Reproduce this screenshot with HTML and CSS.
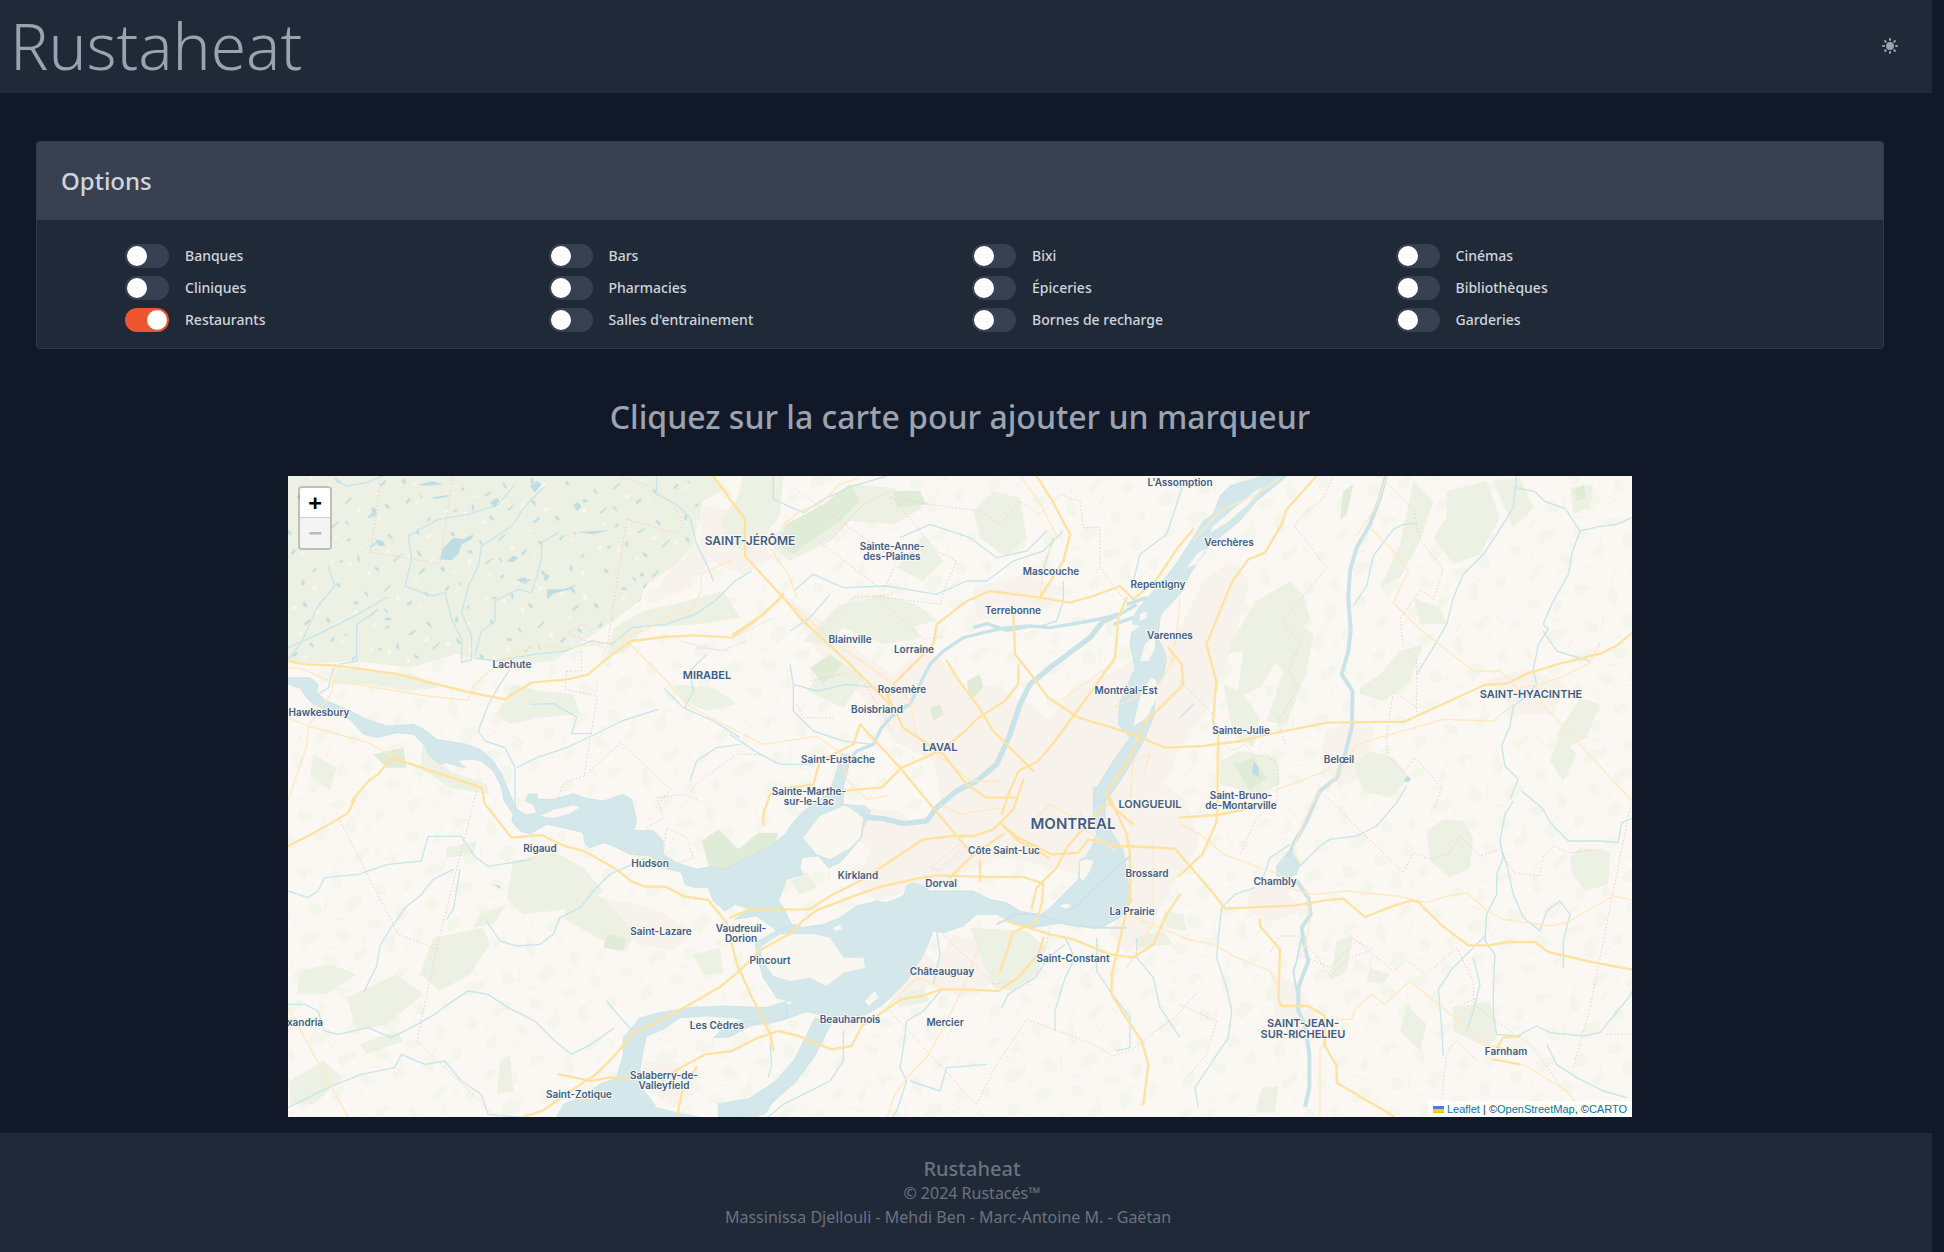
FILE: index.html
```html
<!DOCTYPE html>
<html lang="fr">
<head>
<meta charset="utf-8">
<meta name="viewport" content="width=device-width, initial-scale=1">
<title>Rustaheat</title>
<link rel="stylesheet" href="styles.css">
</head>
<body>
<header class="topbar">
  <h1 class="brand">Rustaheat</h1>
  <button class="theme" type="button" aria-label="Changer de thème">
    <svg width="20" height="20" viewBox="0 0 20 20" fill="currentColor" aria-hidden="true"><path fill-rule="evenodd" clip-rule="evenodd" d="M10 2a1 1 0 011 1v1a1 1 0 11-2 0V3a1 1 0 011-1zm4 8a4 4 0 11-8 0 4 4 0 018 0zm-.464 4.95l.707.707a1 1 0 001.414-1.414l-.707-.707a1 1 0 00-1.414 1.414zm2.12-10.607a1 1 0 010 1.414l-.706.707a1 1 0 11-1.414-1.414l.707-.707a1 1 0 011.414 0zM17 11a1 1 0 100-2h-1a1 1 0 100 2h1zm-7 4a1 1 0 011 1v1a1 1 0 11-2 0v-1a1 1 0 011-1zM5.05 6.464A1 1 0 106.465 5.05l-.708-.707a1 1 0 00-1.414 1.414l.707.707zm1.414 8.486l-.707.707a1 1 0 01-1.414-1.414l.707-.707a1 1 0 011.414 1.414zM4 11a1 1 0 100-2H3a1 1 0 000 2h1z"/></svg>
  </button>
</header>

<main class="content">
  <section class="card">
    <h2 class="card-title">Options</h2>
    <div class="options">
      <label class="option"><input class="switch" type="checkbox">Banques</label>
      <label class="option"><input class="switch" type="checkbox">Bars</label>
      <label class="option"><input class="switch" type="checkbox">Bixi</label>
      <label class="option"><input class="switch" type="checkbox">Cinémas</label>
      <label class="option"><input class="switch" type="checkbox">Cliniques</label>
      <label class="option"><input class="switch" type="checkbox">Pharmacies</label>
      <label class="option"><input class="switch" type="checkbox">Épiceries</label>
      <label class="option"><input class="switch" type="checkbox">Bibliothèques</label>
      <label class="option"><input class="switch" type="checkbox" checked>Restaurants</label>
      <label class="option"><input class="switch" type="checkbox">Salles d'entrainement</label>
      <label class="option"><input class="switch" type="checkbox">Bornes de recharge</label>
      <label class="option"><input class="switch" type="checkbox">Garderies</label>
    </div>
  </section>

  <h2 class="prompt">Cliquez sur la carte pour ajouter un marqueur</h2>

  <div class="map">
    <svg class="map-art" viewBox="0 0 1344 641" preserveAspectRatio="xMidYMid slice">
      <defs>
        <pattern id="fields" width="610" height="470" patternUnits="userSpaceOnUse" patternTransform="rotate(-18) scale(.8)">
          <path class="wood" d="M20 40l40-12 20 10-16 22-34 6zM110 90l26-30 14 8-10 34-22 8zM210 30l50 8 6 22-30-4-8 20-20-14zM320 110l18-40 16 6 4 40-14 30-18-8zM420 50l60-20 14 16-40 24-26 8zM540 100l24-22 22 18-10 20-24 4zM50 180l36-20 24 14 30-6-8 26-46 18-40-8zM200 190l14-26 20 4 22 38-16 12-34-8zM330 220l40-30 30 6 8 30-30 10-24 18zM470 180l26-10 10 40-20 14-22-12zM560 210l30-16 8 30-22 18zM20 300l24-18 26 22-14 26-30-6zM130 280l50-16 30 20-14 20-34 2-20 18zM270 310l14-20 24 10 20 30-20 14-30-8zM400 300l52 4 10 26-40 6-20-12zM510 300l30-18 16 26-20 28-26-4zM70 400l40-20 16 14-20 26-40 12zM190 380l26-10 30 34-14 18-28-8zM310 400l46-22 12 16-24 28-30 4zM430 400l30-30 20 10-10 50-30 6zM550 390l30-10 10 24-26 20-20-4z"/>
          <path class="wood-line" d="M80 110l40 30M150 20l20 34M280 170l-20 50M380 30l-30 24M440 130l30-22M510 50l16 34M150 220l-30 20M290 250l30 16M430 250l40-16M540 270l-20 12M100 340l-20 24M240 350l30 10M370 350l-18 24M480 370l30-14M160 440l30-12M280 440l20 14M500 440l30-20"/>
        </pattern>
        <pattern id="lakes" width="470" height="360" patternUnits="userSpaceOnUse" patternTransform="rotate(-24) scale(.8)">
          <path class="clearing" d="M30 30l14-6 4 6-12 8zM90 70l8-10 8 6-8 12zM150 20l20 4-4 8zM230 80l22-8 4 8-16 8zM400 90l16-6 6 8-14 8zM140 130l6-12 12 4-6 12zM300 130l12-10 8 8-10 10zM370 180l14-10 12 6-16 10zM30 240l16-8 6 6-14 10zM200 260l8-14 10 6-6 14zM280 220l24 4-4 8zM430 250l20-6 2 8zM80 320l10-14 10 8zM260 320l10-12 12 6zM410 320l16-8 6 10z"/>
          <path class="pond" d="M60 40l12-2 10 6-14 4zM130 60l6-12 6 2-4 18-8 6zM190 36l26-6 12 4-34 8zM270 20l4 20 10 8-4-24zM370 60l12-14 4 8-8 18zM430 30l20-4-8 8-14 6zM20 110l10 4 2 18-12-8zM180 110l10 16-2 12-12-14zM250 120l36-10 6 2-38 14zM350 120l8 18-6 14-8-20zM50 200l16 4 2 12-18-6zM110 180l4 16-6 8-4-20zM170 210l30-12 8 4-32 12zM320 200l30-10-6 12-22 6zM400 220l10-8 6 18-10 6zM90 270l32-8 6 2-34 12zM150 270l6 18-4 4-8-18zM230 290l28-8-10 12-16 4zM310 270l10 14-4 14-10-16zM380 300l18-10 8 4-18 12zM440 290l10 16-6 4zM120 340l16-6 2 8-14 4z"/>
        </pattern>
      </defs>
      <rect class="land" width="1344" height="641"/>

      <g transform="translate(-8 -5) scale(.33333)">
        <rect fill="url(#fields)" opacity=".5" x="24" y="15" width="4032" height="1923"/>

        <!-- Built-up areas -->
        <g class="urban">
          <path d="M1270 100l90 20 60 60 60 80-90 50-100-40-60 80-130 50 60-90 100-90z"/>
          <path d="M1510 370l130 90 110 90 90 60 80-70 60 20 80 100 80-20 110 60 60 50 60-90 130-60 190-110 80-160 80-60 60 60-60 220-50 140-110 160-60 130 10 160-110 120-170-60-190-40-190 70-190 60-60-40 60-160 200-70-30-150-120-60-100-140-130-130z"/>
          <path d="M2080 350l150-40 120 40-40 60-220 40zM2500 990l60-90 80 30 80 60 40 130-100 150-60 120-60 60-50-60 40-90-20-190z"/>
          <path d="M3140 780l90-40 50 60-20 110-80 40-60-80zM3620 630l120-40 120 50-40 90-110 0zM2920 1230l90 20 60 70-90 30-80-30zM2970 1500l80 40 60 90-40 70-80-40zM2020 1390l90 30 60 100-120 60-120-40zM1740 1010l120 10 60 60-110 80-90-60z"/>
          <path d="M960 1280l160 30 120 70-60 60-110-20zM1090 1770l90 0 90 80-90 60-80-60zM1790 1500l140-60 60 60-90 90-120-20zM1460 1420l200-20 90 90-100 50-130-20z"/>
        </g>

        <!-- Woodland -->
        <path class="wood" d="M24 15H1300l30 45-60 30-30 130-50 60-90 60-20 50-80 60-90 60-90 60-140 10-150-30-140 40-160-20-150 10-100-20-80 10z"/>
        <path fill="url(#lakes)" d="M24 15H1300l30 45-60 30-30 130-50 60-90 60-20 50-80 60-90 60-90 60-140 10-150-30-140 40-160-20-150 10-100-20-80 10z"/>
        <g class="wood">
          <path d="M1000 470l90-50 90-20 150-40 50 80-130 20-160 10-50 70-60 20zM170 590l90 10 140 10 80 40-100 10-110-20-110 0zM700 640l80 20 100 10 20 60-120 10-90 20-40-30zM430 820l80 80 110 40 10 30-120-20-90-60zM1180 640l120 10 70 50-90 20-70-30zM100 850l70 40-20 70-60-50z"/>
          <path d="M1390 15h120l-10 120-90 110-60-20-30-80 50-60zM1520 160l110-60 80-60 130 10 90 60-90 50-130-10-60 60-120 60-70-60zM1740 390l60-20 110 30 60 50-90 20-60-30zM2080 120l60-60 80 20 20 120-60 60-80-60zM1930 190l60 80-60 60-80-40z"/>
          <path d="M1680 400l130-20 80 60 30 60-110 20-120-50-60 50-60-10zM1660 560l90 60-60 90-110-50z"/>
          <path d="M2860 500l70-110 100-60 40 40 20 70-20 30-60 70-70 110-70 30 20-140-50 10zM3030 440l70 50-20 110-60 160-60-10 50-150-50-60zM3240 650l60-40 60-70 70-20-40 110-80 60-70-20zM3400 380l80 30 20 50-80 0zM3400 30l60 60-40 120-60 110-60 30 60-130zM3500 60l120-30 40 110-60 110-80 30-60-80 40-60zM3640 30l80-10 40 90-60 60zM3870 50l70-10-10 70-50 20zM3900 680l60 20-40 100-60 30-30-40zM3840 790l50 60-40 80-40-60z"/>
          <path d="M3220 880l50-40 70 20 50 60-60 60-80-20zM2820 870l60-30 110 20 10 80-70 30-110-30zM2830 640l50 20 60 80-20 90-60-40z"/>
          <path d="M3440 1080l50-35 60 5 30 50-10 90-60 30-60-50zM3870 1160l30-30 90 10-5 100-70 20-40-50zM3520 1610l110-20 20 110-30 30-100-50zM2945 1850l50-5-10 80-60 0zM3270 1490l60 20-20 30-50-10zM3170 1410l50-20-20 110-50 30zM3380 1600l60 60-20 80-60-60z"/>
          <path d="M700 1170l120-30 90 50 60 70-60 50-180 20-50-50zM880 1260l90 20 90 100-20 60-90-40-100-60zM460 1400l150-30 20 50-60 90-90 50-60-50zM500 1130l90-20-10 40-80 10zM1240 1450l80-20 10 80-60 0zM600 1330l80-30-40 60-60 10zM60 1500l90-20 80 30-90 60-90 0zM200 1580l150-70 80 60-110 90-90 20zM240 1720l110-40 20 30-110 40zM30 1830l100-60 60 50-90 80-70 0zM660 1770l30-20 10 110-50 10z"/>
          <path d="M2070 1370l170 10 60 50-30 80-70 50-60-10zM1530 1230l50-30 30 50-50 20zM1850 1580l80-30 20 40-90 20zM2650 1320l60 10 10 50-60-10zM2560 1400l90-20 30 40-100 10z"/>
        </g>
        <g class="park">
          <path d="M1520 160l110-60 80-60 30 50-60 60-90 60-50 40-50-30zM1840 60l80 0 20 40-90 10zM2060 630l40-20 10 40-40 40zM1950 710l30-10 10 30-30 20zM1590 590l60-40 40 30-60 60zM3190 60l30-20-20 90-20 20zM2860 880l60-20 40 60-50 40zM1265 1110l50-35 60 60 60-50 60 0-20 70-120 70-60-10zM980 1390l60 10-10 40-60-10zM280 850l90-20 10 60-60 0zM3880 60l30-20 10 40-30 10z"/>
        </g>

        <!-- Municipal and regional limits -->
        <g class="limit">
          <path d="M300 15l-10 110-20 118 210 34 38-262M1040 145l-60 390-120-50 45-25 30 20 40-40M1040 145l150 42 20-30-30-60-70-50-90-30M860 600l45 0 0-60M860 600l-5 55 97 20-40 240-60 20-20 55M912 915l110-100 150 140-30 36M1230 960l30-30 110-80 80 0"/>
          <path d="M1550 160l260 200 40-90-310-220M1630 230l120-130 80-40M1830 80l120 20 150 20 60 40 60-70 60 40 60-60 60 20 10 80 50 0 0 120 90 120M1780 375l200 25 20-60 30-70-60-30-140-170M1620 480l100-100 120-10M1790 375l140 130 60-10M1590 630l140-30 80 130 30 60M1550 700l20 40 90 0"/>
          <path d="M3160 15l-30 65-90 80 100 130-130 160 50 70-35 80 30 50-60 100 20 70M3300 15l100 100 20 90 70 90-30 90-40-30-60 90 10 80 40 40 0 160M3320 800l20-140 70 50M3320 800l5 60 50 40 30-40 80 90-20 60M2835 820l20 20 40-20 30 40 30-10 40 30-5 110-60 50-50 110M2700 630l110 110"/>
          <path d="M590 960l-110 430-70 320 240 228M175 1040l180 350 125 48"/>
          <path d="M3120 960l250 245 30-60 50 20 60-20 30-50 60 60 60-20 40 70 80 10 10-60 30-30 50 20 100-10M4050 1010l-120 600-50 180M3220 1405l60 30-80 30-50 50-40-60-50-60-60 0-30 50M3060 1450l90 40 80-80 110 90 40-30 60 40 90-80 50 100 0 70 180 130 90 130M2700 1600l110 50-30 100-60 70M3480 1938l20-190 30-40 60 60M3980 1690l76 0M3520 1610l80-30"/>
          <path d="M1980 1380l160 160 60-10 100-110 10-60M1820 1610l270 290 60-120 90-135 190 70 70 40 60-20 60-50 70-50 60-70"/>
          <path d="M1100 1070l50-30-20-60 80-10 50 20M1150 1150l30 30 60-20-20-60-60-30z"/>
        </g>

        <!-- Creeks and small rivers -->
        <g class="creek">
          <path d="M160 20l40 25 60-10 50-20M24 565l40-50 50-110 50-60-20-60M24 530l90-40 100-50 110-62M180 580l50-10 0-60 0-50 45-30M375 345l20-80-10-70 90-50 90-15 90-30 50-60M375 345l80 30 40-10 20 80 30 60 0 70 30-10 0-70-30-70 20-80 30-60 10-60 90-60 40-60 60-60M585 550l20-70 40-30 0-60 70-35 40 10 30-100 0-50 50-30M585 562l60 8 60-10 60-10 90-10 80-30 60 10 60-50 100-10 90-30 60-40 60-60 50-30M690 595l-30 45-35 60-30 80 20 30 60 20 30 60 0 160M710 890l60-30 90-30 75-35 90-45 110-35M750 700l70-2 70 40-15 50 60 0M1130 15l0 55 60 30 40 40 20 80 30 60 20 50M1150 650l60 60 90 40 80 50M1230 930l20-60 60-40 70-10M160 590l-15 60-30 20M1280 550l-50 50 10 60-25 50"/>
          <path d="M1480 15l0 70 90 40 60-40 90-40 100-30M1540 360l60-50 90 40 130-5 150 25 90-40 60 0 80-60 90-30 60-60M1860 200l90-40 120 40 80 60 90-20 60-60M2320 200l-30 100M2350 330l0 60-20 60-60 20M2560 330l20-80 80-60 30-90 20-60M1530 480l60-40 60-70M1530 580l10 60 70 20 90-20 90 10M1540 640l0 80 60 60 90 30 90 10M1350 790l90 60 60 30 100 0"/>
          <path d="M3220 405l40-60 20-90 60-80 30-15 40-3M3410 610l50-80 40-70 20-80 30-70 60-60 40-60 50-80 10-100 10-35M3710 50l55 12 30 30 60 20 45 68-25 70-10 60-50 90-25 60 15 15-30 45-15 75 10 45-35 40-35 25-10 60-25 60 10 60 40 40-25 60M3900 180l60-14 50-6 46-20M3790 480l40 60 100 30M2700 740l40-40"/>
          <path d="M24 1260l60 20 30-20 20-40 100-10 90-30 100-10 20-74 100 0 40 60 40 30 130-20M520 1195l-60 30-40 50-40 30-50 70-30 50-10 60-30 60-10 20M540 1195l-10 60-10 60-20 30M620 1350l40 60 50 15 70-5 40-30 20-50 60-30 40-50 50-50 110-50M24 1600l50 0 40 20 20 60 40 10 90-20 70 30 60-30 70-40 40-30 60-40 60 10 60 40 80 40 60 60 50 40 60-30 70-50M24 1910l60-30 60-30 100-40 100-20 20-40 70 30 60-10 50 60 60 40 20 60 110 10M980 1590l50 60 30 30"/>
          <path d="M1470 1720l5 60-10 40M1690 1680l0 90-40 60-80 40-60 30-60 50M1990 1550l-60 70-50 30-10 80-10 60 20 40-30 90-20 30M1890 1830l90 30 20-70 120-10M2165 1610l20-40 80-50 40-60 50-40M2325 1680l0-60 30-100 30-60-30-60M2450 1400l0 100 40 60 60 80 0 90-40 10M2570 1400l0 60 50 60 20 90 60 90M1970 1380l10 70-20 90"/>
          <path d="M3700 990l-25 40-15 80 10 50-20 50 0 60-30 60-5 80 30 40-5 100 0 80 10 60 60 5 60-30 40 20 100 10 50-10 40-50 50-60 16-40M3725 960l60 50 30 50 50 50 100 0 50 5 10-60 46-20M3660 1120l20 60 20 90 30 70 50 40 20-60 40-30 30 40-20 80 0 80M3490 1755l-5-90-10-110 40-60 100-100M3580 1460l20 80-20 80-20 60M2925 1250l-60 20-40 40-10 90-5 60 30 90 15 70-10 80-60 90-40 60 10 60M3060 1185l60-60 30-20 80-10 60-30 60-70 30-50M3030 1120l-60 40-20 60M3800 1720l30 60 60 40 80 40 70 20"/>
        </g>

        <!-- Lakes and main rivers -->
        <g class="water">
          <path d="M24 620L90 620 115 640 110 665 140 690 190 710 260 745 320 765 400 760 440 780 470 805 560 820 600 835 640 870 665 910 690 970 710 1015 740 1032 770 1025 760 1000 735 990 745 970 770 968 775 985 820 985 880 968 920 982 970 990 1030 970 1055 985 1070 1050 1062 1078 1120 1080 1150 1110 1148 1150 1190 1175 1250 1195 1300 1185 1330 1195 1380 1172 1410 1155 1470 1125 1515 1090 1535 1060 1570 1020 1620 985 1650 960 1670 900 1685 850 1705 850 1705 890 1690 950 1690 1000 1755 1005 1772 1020 1750 1070 1745 1100 1680 1175 1645 1190 1615 1155 1565 1160 1560 1190 1570 1210 1520 1225 1495 1290 1510 1310 1535 1360 1560 1380 1500 1395 1480 1370 1430 1335 1365 1345 1410 1315 1365 1300 1335 1320 1300 1290 1285 1250 1245 1250 1215 1240 1205 1205 1150 1190 1110 1155 1050 1150 1000 1125 970 1115 930 1130 915 1120 910 1085 850 1070 800 1060 765 1080 750 1090 720 1080 695 1050 700 1030 672 990 665 950 640 900 605 870 575 865 530 868 555 890 500 875 480 880 445 850 440 830 400 790 350 785 290 800 250 790 210 745 150 720 100 700 80 680 60 650 24 640Z"/>
          <path d="M1545 1360L1565 1370 1630 1360 1680 1340 1730 1305 1790 1290 1820 1295 1870 1275 1880 1245 1895 1235 1930 1245 1950 1260 2080 1260 2130 1285 2180 1295 2220 1320 2280 1332 2310 1310 2350 1270 2395 1225 2400 1165 2415 1160 2435 1130 2450 1090 2440 1040 2440 950 2475 950 2475 1050 2500 1090 2530 1140 2545 1240 2555 1290 2520 1340 2460 1370 2400 1360 2350 1355 2260 1370 2200 1355 2150 1330 2090 1330 2050 1365 1990 1385 1960 1380 1940 1430 1925 1460 1880 1530 1850 1560 1810 1600 1760 1630 1730 1635 1670 1650 1640 1635 1580 1622 1500 1650 1410 1665 1350 1698 1300 1700 1350 1655 1410 1647 1460 1640 1490 1610 1545 1595 1490 1580 1450 1520 1430 1450 1425 1415 1480 1385Z"/>
          <path d="M2820 75l30-30 95-30 75 0-40 35-50 40-50 60-50 40-40 30-60 90-30 60-50 50-10 20-5 60 25 60-10 60-20 20-10 100-30 70-10 20-40 70-40 60-20 30-40 0 10-40 50-80 50-70-35-40 5-70 20-40 25-60-15-70 10-80 15-30 55-60 50-60 50-75 40-65 30-20z"/>
          <path d="M1605 1640l50 15-50 100-60 80-80 70-70 33-80 0 0-40 90-15 80-50 60-70z"/>
          <path d="M830 1938l20-38 50-20 60-40 50-20 20-70 0-50 50-60 60-15 90-15 100-5 130 5 60-20 0 50-60 20-100-20-80-5-80 5-50 35-50 20-10 40-10 60 10 60 40 55 60 15 100 20 100-10 30-20 60-30-20 40-80 30z"/>
          <path d="M2990 1185l40-50 30 45-10 30-30 10-30-5z"/>
        </g>
        <g class="pond">
          <path d="M480 265l10-35 30-30 30 4 30-14-5 15-30 15-10 30-20 18zM800 355l50 0 42-15-20 15-60 15-10 15zM890 183l100-5-50 12zM750 45l20-15 15 10-20 25zM415 42l40-12 35 10-50 4zM450 80l50-8 10 4-40 8zM630 95l20-15 8 8-14 22zM275 110l10 0 5 20-12 10zM285 205l25 5 5 15-20 0zM680 270l20-16 15 6-15 14zM710 325l25-6 8 8-20 8zM790 320l10-12 8 8-10 16zM310 445l14-8 14 10-12 2zM880 100l14-6 10 10-12 18zM1078 310l10-4 4 8-8 4zM1088 345l16-8-12 16zM2915 905l8-35 12 20 4 30zM3370 930l12-14 12 8-8 10zM640 1240l20 5 0 8z"/>
        </g>
        <g class="river">
          <path class="w16" d="M2515 430l-45 20-40 50-120 90-60 50-30 60-30 90-40 90-60 50-60 30-60 50-30 40-70 8-60-15-100-8"/>
          <path class="w10" d="M2570 400l-50 30-90 20-120 20-60-5-70 5-50 10-80 20-60 40-40 40-30 60-30 60-50 30-35 40-25 50-50 20-30 40"/>
          <path class="w10" d="M2080 470l40-12 60 20 60-10M1880 700l-20 20-30 20M2540 400l60-20M2500 460l60-20"/>
          <path class="w12" d="M3318 15l-18 65-30 80-40 70-20 70-5 80 7 100-7 60-20 70 33 50-3 110-20 80-25 70-50 40-15 30-25 60-40 70-15 40M3050 1230l35 50 7 50-27 40 10 60 10 40-30 80 0 70 20 40 13 90 0 100-13 58"/>
          <path class="w6" d="M3065 1400l-15 70-10 30 10 60M2150 1360l60-30 60 0 90 30 80 10 100 0M2350 1325l40-20 60-60 100-90"/>
        </g>
        <g class="isle">
          <path d="M1690 1005l-70 30-50 65 40 50 40 15 60-35 30-30 10-60-50-35zM1440 1430L1500 1390 1600 1390 1650 1400 1660 1415 1690 1460 1750 1460 1755 1490 1690 1505 1640 1545 1590 1520 1530 1530 1480 1515 1450 1470ZM780 1035l40-18 60-14 20 6-30 18-50 14zM790 175l0 0M2790 185l10-20 60-50 60-50 30-20-50 60-60 50zM2570 720l15-60 30-40 15 10 0 50-30 60-40 25zM2580 570l15-50 30-30 0 40-20 40zM2720 290l30-40 30-20-30 50zM1755 1590l30-30 10 20-30 25zM1660 1370l20-10 5 15-20 5zM2340 1305l20-8 15 8-20 8zM2530 480l30-20 20 5-30 20zM2580 430l20-10 0 20-20 10zM2400 1220l0-50 20-5 20 5-10 30-20 30z"/>
        </g>

        <!-- Runways -->
        <path class="runway" d="M1200 510l120 30 80-30M1360 500l120-60M1250 530l100 10M1950 1190l90-70 20 20-80 60zM1970 1200l70-60M2880 960l30-30"/>

        <!-- Secondary roads -->
        <g class="minor">
          <path d="M24 590l50 5 60 30 310 50 120 13 20-50 50-40 80-60 80-10 90 0 90-10 120-40 60-40 80-20 30-60 0-50 90-40M165 585l-10 80-70 100-5 60-56 165M24 740l60 25 180 50 80 45M1040 510l120 120 60 70 90 50 70 35M1295 15l60 60M1390 790l60 30 100-15 60-10 70 50 20 80 60 60 60-10"/>
          <path d="M1500 170l60-50 60-20 60-60 60-20M2220 15l60 80 50 100-40 80-10 120M1510 380l160 140 160 110 60 60 20 110 100 80 60 50 90 0M1470 230l60 90 20 60M2700 380l-10 110-20 100M2500 710l130-60 60-100M2740 210l80-90 110-50 70-50M2510 570l-170 120M2550 990l10-120 50-20-20 60"/>
          <path d="M3275 175l65 65 45 60-45 95 80 80 160 125 80 0 60 60M3680 690l40-40 60-10 60-20 90-45 30-60M3140 960l90-140 100-30 160-45 150 5 60-50M3770 680l286 310M3320 15l-30 90-60 90M2980 960l160-60"/>
          <path d="M2700 1060l60 30 70 60 110 40 60 20 20 40 80 20 100-10 150 15 90 20 60-20 60-10 70 60 40 20 140 20 50-10 140-80 190 40M2700 1400l100 20 70 40 100 40 30 60M3080 1255l10 90-10 60-20 60M3170 1645l45 0 10-30 50-45 40 30 75-70 110 90 90 80 40 25 60 10M3120 1938l0-200 30-60M3730 1780l130 80 60 78M24 1610l180 328M3060 1180l-20-50 50-120 30-50"/>
          <path d="M2110 1390l-60 160-60 120-50 90-60 60-40 60-20 60M1820 1610l90-90 100 40M2540 1490l80-130 0-250M2540 1330l200 80M2250 1060l60-60 90 50M2400 1020l20 60 90 60M1980 1000l60 30 120-20"/>
        </g>

        <!-- Motorways -->
        <g class="major">
          <path d="M24 570l50 10 90 3 180 25 220 55 110 22 80-50 110-10 60-15 60-50 70-50 100-12 90-5 110 7 60-40 80-70"/>
          <path d="M1300 15l50 70 45 60 0 110 110 120 60 70 140 130 60 60 80 80M1510 370l-60 60-90 60"/>
          <path d="M2270 15l50 80 50 95-20 80-70 110-150-20-70 30-90 70-10 60M1960 520l-60 60-60 60"/>
          <path d="M2280 380l90 15 70-20 80-30 40 40 70-60 60-90 50-60M2540 380l-25 60-10 120-70 100-110 150-50 60-60 30-30 70-20 60M2200 430l5 120 40 50 60 80 90 60 150 45 110 45 115-5 113-15 80-20 180-35 230-3 110-50 130-60 70-5 60-30 100-30 120-30 50-25 60-50 26-10"/>
          <path d="M2215 580l0 60-40 50-80 50-40 40-60 50-60 30-70 30-60 60-130 10M1820 670l50 100 60 40 60 40 70 90 60 40 90 0M1740 760l120 130 90 110 60 70 50 60 10 10M1740 760l-20 60-60 30-40 20-20 70-70 10-60 20-20 60 0 30"/>
          <path d="M1800 650l30 20M2000 570l30 50 60 80 50 80 40 40 80 80"/>
          <path d="M3110 15l-90 100-15 45-50 85-50 20-50 70-76 185 30 110-10 120 15 40-2 240-5 30-40 90-70 65"/>
          <path d="M24 1125l60-30 90-50 30-20 30-60M215 990l50-60 30-20 40-50 150 50 120 40 10 50 80 100 90-8 60 30 70 20 90 50 50 40 40 15 60 0 60 30 70 10 55 70 30 120 40 90 60 120 10 50"/>
          <path d="M730 1938l60-20 100-70 60-40 50-50 60-70 120-60 140-80 60-50 60-60 90-50 40-40 40-30 130-50 60-20 110-25 60-10 160 5 100 0 60 20-5 60-15 55-70 30-40 120"/>
          <path d="M1350 1340l60-25 180 0 60-40 100-50 180-120 90-10 60 0 60-20 60-60 30-90M2165 1060l50 40 100 50 80-5 30-40 90 20 80 3 90 5 60 70 60 70 30 40 100-5 110-5 90-15 55-5 65 55 90-35 50-15 20 5 70 70 80 60 60 0 60-10 80 0 40 30 130 30 120 23 66 0"/>
          <path d="M2165 1060l50 50 60 30 30 20M2010 1220l70-70 90-60M2100 1170l0 60M2480 960l60 130 10 60 0 130-20 80-20 90-15 60 0 60 30 50 60 90 20 70-15 120"/>
          <path d="M2180 1350l130 40 70 15 110 45 70 10 60-40 40-90 40-60M2290 1400l-15 50-60 70-60 40-110-5-60 0-60 20-60 10-60 40-60 40-30 60-60 10-100-40-60-15-60 20-80 40-80 10-90 50-60 50-60-30-80 0-50 10-100-20"/>
          <path d="M2940 1345l0 20 60 70-5 150 10 20 80 0 50 30 0 90 35 60 0 50 170 100 0 20M2700 1040l110-8 100-20M2560 1060l-70-60-10-40M2490 950l60-90 40-100 60-60 60-60-5-60-40-50M1190 1938l20-90 40-60M3650 1730l20-30 50-5M3640 1765l80 15"/>
          <path d="M2480 1000l-60 60-60 70-30 60-60 60-15 60"/>
        </g>
      </g>

      <!-- Place names -->
      <g class="place">
        <text x="892" y="10">L'Assomption</text>
        <text x="604" y="74">Sainte-Anne-</text>
        <text x="604" y="84">des-Plaines</text>
        <text x="941" y="70">Verchères</text>
        <text x="763" y="99">Mascouche</text>
        <text x="870" y="112">Repentigny</text>
        <text x="725" y="138">Terrebonne</text>
        <text x="882" y="163">Varennes</text>
        <text x="562" y="167">Blainville</text>
        <text x="626" y="177">Lorraine</text>
        <text x="224" y="192">Lachute</text>
        <text x="614" y="217">Rosemère</text>
        <text x="838" y="218">Montréal-Est</text>
        <text x="589" y="237">Boisbriand</text>
        <text x="31" y="240">Hawkesbury</text>
        <text x="953" y="258">Sainte-Julie</text>
        <text x="550" y="287">Saint-Eustache</text>
        <text x="1051" y="287">Belœil</text>
        <text x="521" y="319">Sainte-Marthe-</text>
        <text x="521" y="329">sur-le-Lac</text>
        <text x="953" y="323">Saint-Bruno-</text>
        <text x="953" y="333">de-Montarville</text>
        <text x="252" y="376">Rigaud</text>
        <text x="716" y="378">Côte Saint-Luc</text>
        <text x="362" y="391">Hudson</text>
        <text x="570" y="403">Kirkland</text>
        <text x="859" y="401">Brossard</text>
        <text x="653" y="411">Dorval</text>
        <text x="987" y="409">Chambly</text>
        <text x="844" y="439">La Prairie</text>
        <text x="373" y="459">Saint-Lazare</text>
        <text x="453" y="456">Vaudreuil-</text>
        <text x="453" y="466">Dorion</text>
        <text x="482" y="488">Pincourt</text>
        <text x="785" y="486">Saint-Constant</text>
        <text x="654" y="499">Châteauguay</text>
        <text x="562" y="547">Beauharnois</text>
        <text x="657" y="550">Mercier</text>
        <text x="429" y="553">Les Cèdres</text>
        <text x="17" y="550">xandria</text>
        <text x="1218" y="579">Farnham</text>
        <text x="376" y="603">Salaberry-de-</text>
        <text x="376" y="613">Valleyfield</text>
        <text x="291" y="622">Saint-Zotique</text>
      </g>
      <g class="place town">
        <text x="419" y="203">MIRABEL</text>
        <text x="1243" y="222">SAINT-HYACINTHE</text>
        <text x="652" y="275">LAVAL</text>
        <text x="862" y="332">LONGUEUIL</text>
        <text x="1015" y="551">SAINT-JEAN-</text>
        <text x="1015" y="562">SUR-RICHELIEU</text>
      </g>
      <text class="place large-town" x="462" y="69">SAINT-JÉRÔME</text>
      <text class="place city" x="785" y="353">MONTREAL</text>
    </svg>

    <div class="zoom">
      <button class="zoom-btn" type="button" aria-label="Zoom avant">+</button>
      <button class="zoom-btn" type="button" aria-label="Zoom arrière" disabled>−</button>
    </div>
    <div class="credits">
      <a href="#leaflet"><svg class="flag" width="11" height="7" viewBox="0 0 12 8" preserveAspectRatio="none" aria-hidden="true"><path fill="#4c7be1" d="M0 0h12v4H0z"/><path fill="#ffd500" d="M0 4h12v3H0z"/><path fill="#e0bc00" d="M0 7h12v1H0z"/></svg> Leaflet</a> | ©<a href="#osm">OpenStreetMap</a>, ©<a href="#carto">CARTO</a>
    </div>
  </div>
</main>

<footer class="footer">
  <p class="footer-brand">Rustaheat</p>
  <p class="footer-copy">© 2024 Rustacés™</p>
  <p class="footer-team">Massinissa Djellouli - Mehdi Ben - Marc-Antoine M. - Gaëtan</p>
</footer>
</body>
</html>
```
FILE: styles.css
```css
* { box-sizing: border-box; }

body {
  margin: 0;
  padding-right: 12px;
  min-height: 100vh;
  display: flex;
  flex-direction: column;
  background: #111827;
  color: #9ca3af;
  font-family: "Noto Sans", "Open Sans", sans-serif;
  font-size: 16px;
  line-height: 24px;
}

h1, h2, p { margin: 0; }

.topbar {
  display: flex;
  align-items: center;
  justify-content: space-between;
  padding: 0 22px 1px 10px;
  background: #1f2937;
}
.brand {
  font-size: 64px;
  line-height: 92px;
  font-weight: 300;
}
.theme {
  display: flex;
  padding: 10px;
  border: 0;
  background: none;
  color: #9ca3af;
  cursor: pointer;
}

.content {
  margin-right: 12px;
  padding: 48px 0 16px;
}

.card {
  margin: 0 36px;
  border: 1px solid #2f3a4a;
  border-radius: 4px;
  background: #1f2937;
  overflow: hidden;
}
.card-title {
  padding: 25px 24px 24px;
  border-bottom: 1px solid #2f3a4a;
  background: #374151;
  color: #d1d5db;
  font-size: 24px;
  line-height: 28px;
  font-weight: 500;
}
.options {
  display: grid;
  grid-template-columns: repeat(4, 1fr);
  row-gap: 8px;
  padding: 24px 64px 16px 88px;
}
.option {
  display: flex;
  align-items: center;
  gap: 16px;
  color: #d1d5db;
  font-size: 14px;
  font-weight: 500;
  cursor: pointer;
}
.switch {
  appearance: none;
  width: 44px;
  height: 24px;
  margin: 0;
  padding: 2px;
  border-radius: 12px;
  background: #374151;
  cursor: pointer;
}
.switch::before {
  content: "";
  display: block;
  width: 20px;
  height: 20px;
  border-radius: 50%;
  background: #fff;
}
.switch:checked { background: #f05532; }
.switch:checked::before { margin-left: auto; }

.prompt {
  padding: 48px 0 39px;
  font-size: 32px;
  line-height: 40px;
  font-weight: 500;
  text-align: center;
}

.map {
  position: relative;
  width: 70%;
  aspect-ratio: 1344 / 641;
  margin: 0 auto;
  overflow: hidden;
}
.map-art {
  display: block;
  width: 100%;
  height: 100%;
}

.land { fill: #fbf8f3; }
.urban { fill: #f7f2eb; }
.wood { fill: #edf1e3; }
.wood-line { fill: none; stroke: #edf1e3; stroke-width: 8; }
.park { fill: #e0ecd7; }
.clearing { fill: #fbf8f3; }
.pond { fill: #bfdde4; }
.water { fill: #d4e8eb; stroke: #c6dfe4; stroke-width: 2; stroke-linejoin: round; }
.isle { fill: #faf7f0; }
.limit { fill: none; stroke: #ecced2; stroke-width: 3; stroke-dasharray: 5 6; }
.creek { fill: none; stroke: #c8e5ea; stroke-width: 4; stroke-linejoin: round; }
.river { fill: none; stroke: #cae3e8; stroke-linejoin: round; }
.w16 { stroke-width: 16; }
.w12 { stroke-width: 12; }
.w10 { stroke-width: 10; }
.w6 { stroke-width: 6; }
.runway { fill: none; stroke: #e9e7e8; stroke-width: 3; }
.minor { fill: none; stroke: #ffe8c2; stroke-width: 4; stroke-linejoin: round; }
.major { fill: none; stroke: #ffe2a0; stroke-width: 7; stroke-linejoin: round; stroke-linecap: round; }

.place {
  fill: #3f5d85;
  stroke: #fbf8f3;
  stroke-width: 2px;
  stroke-linejoin: round;
  paint-order: stroke;
  font-family: Inter, "Open Sans", sans-serif;
  font-size: 10px;
  font-weight: 600;
  text-anchor: middle;
}
.town { font-size: 11px; }
.large-town { font-size: 12px; }
.city { font-size: 15px; }

.zoom {
  position: absolute;
  top: 10px;
  left: 10px;
  border: 2px solid rgba(0, 0, 0, .2);
  border-radius: 4px;
  background-clip: padding-box;
}
.zoom-btn {
  display: block;
  width: 30px;
  height: 30px;
  padding: 0;
  border: 0;
  background: #fff;
  color: #000;
  font: bold 22px/30px "DejaVu Sans Mono", monospace;
  text-align: center;
  cursor: pointer;
}
.zoom-btn:first-child {
  border-bottom: 1px solid #ccc;
  border-radius: 2px 2px 0 0;
}
.zoom-btn:disabled {
  border-radius: 0 0 2px 2px;
  background: #f4f4f4;
  color: #bbb;
}

.credits {
  position: absolute;
  right: 0;
  bottom: 0;
  padding: 0 5px;
  background: rgba(255, 255, 255, .8);
  color: #333;
  font: 11px/16px "Liberation Sans", Arial, sans-serif;
}
.credits a {
  color: #0078a8;
  text-decoration: none;
}

.footer {
  flex: 1;
  padding: 24px 12px 24px 0;
  background: #1f2937;
  color: #6b7280;
  text-align: center;
}
.footer-brand {
  padding-left: 24px;
  font-size: 20px;
  font-weight: 500;
}
.footer-copy { padding-left: 24px; }
.footer-team { padding-right: 24px; }
```
